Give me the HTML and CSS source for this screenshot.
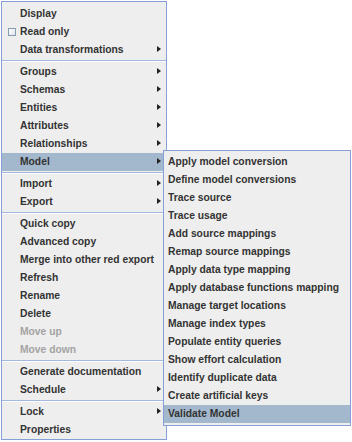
FILE: index.html
```html
<!DOCTYPE html>
<html lang="en">
<head>
  <meta charset="UTF-8">
  <meta name="viewport" content="width=device-width, initial-scale=1.0">
  <title>Context Menu</title>
  <link rel="stylesheet" href="styles.css">
</head>
<body>
  <div class="popup main-menu">
    <div class="item">Display</div>
    <div class="item"><span class="check"></span>Read only</div>
    <div class="item has-sub">Data transformations<span class="arrow"></span></div>
    <div class="sep"></div>
    <div class="item has-sub">Groups<span class="arrow"></span></div>
    <div class="item has-sub">Schemas<span class="arrow"></span></div>
    <div class="item has-sub">Entities<span class="arrow"></span></div>
    <div class="item has-sub">Attributes<span class="arrow"></span></div>
    <div class="item has-sub">Relationships<span class="arrow"></span></div>
    <div class="item has-sub selected">Model<span class="arrow"></span></div>
    <div class="sep"></div>
    <div class="item has-sub">Import<span class="arrow"></span></div>
    <div class="item has-sub">Export<span class="arrow"></span></div>
    <div class="sep"></div>
    <div class="item">Quick copy</div>
    <div class="item">Advanced copy</div>
    <div class="item">Merge into other red export</div>
    <div class="item">Refresh</div>
    <div class="item">Rename</div>
    <div class="item">Delete</div>
    <div class="item disabled">Move up</div>
    <div class="item disabled">Move down</div>
    <div class="sep"></div>
    <div class="item">Generate documentation</div>
    <div class="item has-sub">Schedule<span class="arrow"></span></div>
    <div class="sep"></div>
    <div class="item has-sub">Lock<span class="arrow"></span></div>
    <div class="item">Properties</div>
  </div>

  <!-- submenu for "Model" -->
  <div class="popup sub-menu">
    <div class="item">Apply model conversion</div>
    <div class="item">Define model conversions</div>
    <div class="item">Trace source</div>
    <div class="item">Trace usage</div>
    <div class="item">Add source mappings</div>
    <div class="item">Remap source mappings</div>
    <div class="item">Apply data type mapping</div>
    <div class="item">Apply database functions mapping</div>
    <div class="item">Manage target locations</div>
    <div class="item">Manage index types</div>
    <div class="item">Populate entity queries</div>
    <div class="item">Show effort calculation</div>
    <div class="item">Identify duplicate data</div>
    <div class="item">Create artificial keys</div>
    <div class="item selected">Validate Model</div>
  </div>
</body>
</html>
```

FILE: styles.css
```css
body {
    margin: 0;
    padding: 1px 0 0 1px;
    background-color: #ffffff;
    font-family: "Liberation Sans", Arial, sans-serif;
    font-size: 10.3px;
    font-weight: bold;
    color: #333333;
}

.popup {
    display: flex;
    flex-direction: column;
    box-sizing: border-box;
    background-color: #eeeeee;
    border: 1px solid #84a0d6;
}

.main-menu {
    width: 166px;
    padding: 3px 0 0 0;
}

.sub-menu {
    position: absolute;
    left: 163px;
    top: 150px;
    width: 188px;
    padding: 2px 0 2px 0;
}

.item {
    display: flex;
    align-items: center;
    height: 18px;
    line-height: 18px;
    white-space: nowrap;
    position: relative;
}

.main-menu .item {
    padding-left: 18px;
}

.sub-menu .item {
    padding-left: 4px;
}

.item.selected {
    background-color: #a3b8cc;
}

.item.disabled {
    color: #a3a3a3;
}

.check {
    position: absolute;
    left: 6px;
    top: 5px;
    width: 6px;
    height: 6px;
    border: 1px solid #8a9bb0;
    background: linear-gradient(135deg, #ffffff, #dde6f0);
}

.arrow {
    position: absolute;
    right: 5px;
    top: 5px;
    width: 0;
    height: 0;
    border-left: 4px solid #222222;
    border-top: 3.5px solid transparent;
    border-bottom: 3.5px solid transparent;
}

.sep {
    height: 1px;
    margin: 1px 0 1px 0;
    border-top: 1px solid #a2b8e0;
    background-color: #ffffff;
}
```
